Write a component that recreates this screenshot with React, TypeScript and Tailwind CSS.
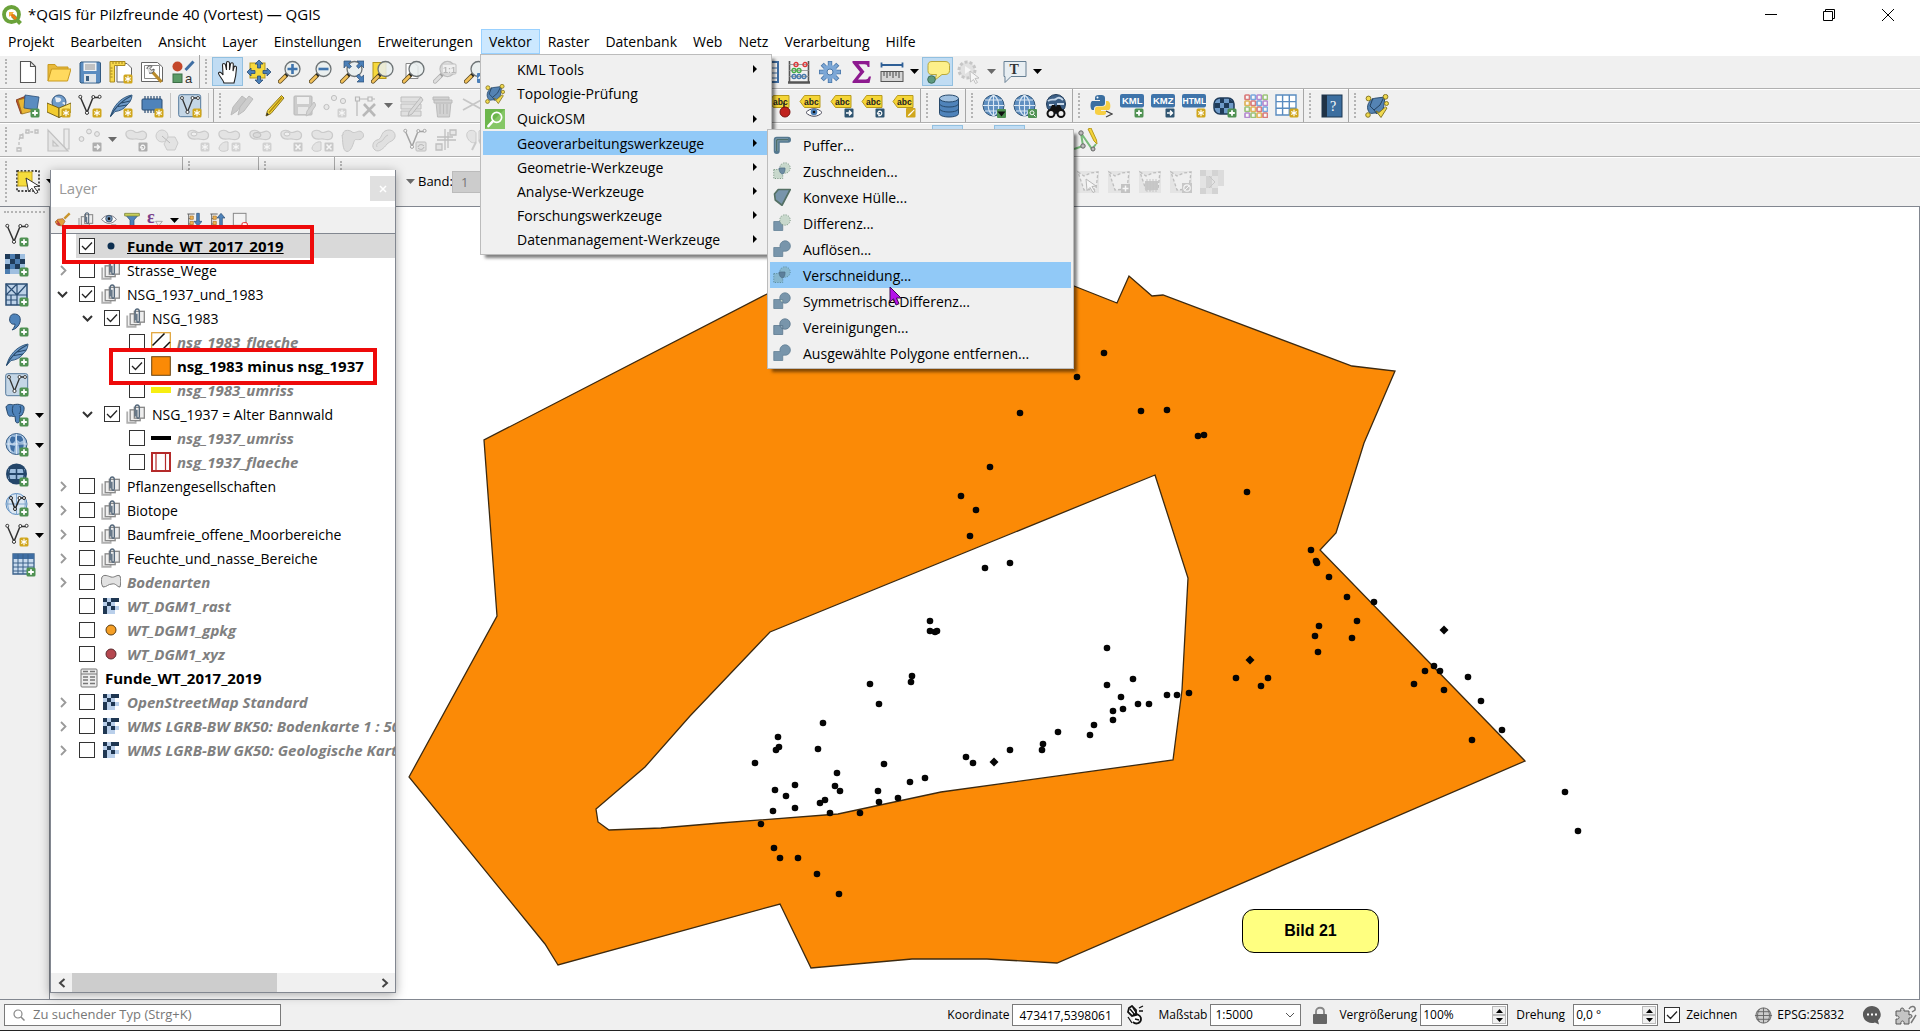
import React from "react";

/* ------------------------------------------------------------------ */
/* Icon building blocks (24 x 24 grid)                                 */
/* ------------------------------------------------------------------ */

const plusBadge = (
  <g>
    <rect x="14.5" y="14.5" width="9" height="9" rx="1.5" fill="#4f9152" />
    <path d="M19 16.2v5.6M16.2 19h5.6" stroke="#fff" strokeWidth="1.8" />
  </g>
);
const starBadge = (
  <g>
    <rect x="14.5" y="14.5" width="9" height="9" rx="1.5" fill="#d0a61c" />
    <path d="M19 15.8v6.4M16.2 17.4l5.6 3.2M16.2 20.6l5.6-3.2" stroke="#fff" strokeWidth="1.2" />
  </g>
);
const arrowBadge = (
  <g>
    <rect x="14.5" y="14.5" width="9" height="9" rx="1" fill="#2f5470" />
    <path d="M16 19h5M19 16.6l2.4 2.4-2.4 2.4" stroke="#fff" strokeWidth="1.5" fill="none" />
  </g>
);
const rotateBadge = (
  <g>
    <rect x="14.5" y="14.5" width="9" height="9" rx="1" fill="#2f5470" />
    <path d="M17.2 21.6c4.4.2 4.6-4.2 1.6-4.4-1.8 0-2 1.6-1.6 2.600M16.200 18.600l1 1.600 1.700-.6" stroke="#fff" strokeWidth="1.2" fill="none" />
  </g>
);
const crossBadge = (
  <g>
    <rect x="14.5" y="14.5" width="9" height="9" rx="1" fill="#c98080" />
    <path d="M16.5 16.5l5 5M21.5 16.5l-5 5" stroke="#fff" strokeWidth="1.6" />
  </g>
);
const vLine = (
  <g fill="none" stroke="#333" strokeWidth="1.5">
    <path d="M2.5 3.5L9 18.5 15 3.500h6.500" />
    <g fill="#fff" strokeWidth="1">
      <circle cx="2.300" cy="2.800" r="1.500" />
      <circle cx="9" cy="18.800" r="1.600" />
      <circle cx="15.300" cy="3" r="1.500" />
      <circle cx="21.600" cy="2.800" r="1.500" />
    </g>
  </g>
);
const feather = (
  <g>
    <path d="M1.500 22.500C4 12 12 3 23 1c0 5-3 8-5 10-3 4-7 6-12 6.500z" fill="#6f9bc9" stroke="#335a80" strokeWidth="1" />
    <path d="M1.500 22.500C6 13 13 6.500 22 2M9 12.500l9-1.500M12.500 9l8.500-2" stroke="#27496b" strokeWidth="1.100" fill="none" />
  </g>
);
const lens = (
  <g>
    <path d="M8.500 15L2 21.500" stroke="#5b4a20" strokeWidth="4.200" strokeLinecap="round" />
    <path d="M7 16.500L2 21.500" stroke="#f2c15a" strokeWidth="2.600" strokeLinecap="round" />
    <path d="M9.500 14l-1.500 1.500" stroke="#222" strokeWidth="3" />
    <circle cx="14.500" cy="9" r="7.500" fill="#e9eeee" fillOpacity=".85" stroke="#6d7375" strokeWidth="1.300" />
  </g>
);
const cloudBlob = (
  <path d="M2 7c-1-5 6-6 9-3 3 2 6-2 9-.5 4 2 3 7-1 8-4 .5-5-1-8-.5-4 .5-8 0-9-4z" fill="#cfd3ce" stroke="#8f948e" strokeWidth="1.200" />
);
const globe = (
  <g>
    <circle cx="11.500" cy="11.500" r="10.500" fill="#5f8fc0" stroke="#2f5478" strokeWidth="1" />
    <path d="M1 11.500h21M3 6h17M3 17h17M11.500 1v21M11.500 1c-7 5-7 16 0 21M11.500 1c7 5 7 16 0 21" stroke="#dbe8f4" strokeWidth="1.100" fill="none" />
  </g>
);
const abcTag = (
  <g>
    <path d="M1 7.500L5.500 1.500H21v12H5.500z" fill="#f5d536" stroke="#b79a1d" strokeWidth="1" />
    <text x="5" y="10.500" fontSize="8.500" fontWeight="700" fontFamily="Liberation Sans, sans-serif" fill="#222">abc</text>
  </g>
);
const pencil = (x: string, y: string, l: string) => (
  <g>
    <path d="M20.500 1.500l-14 15-1.500 5.500 5-2.500 13-15.500z" fill={y} stroke={l} strokeWidth="1" />
    <path d="M21 3.500L8 18.500" stroke={x} strokeWidth="1.500" />
    <path d="M5 22l1-3.500 2 2z" fill="#333" />
  </g>
);
const topology = (
  <g>
    <path d="M3 16c-2-6 3-12 9-12l8-1-1 7c0 6-4 10-9 9-3 0-5 2-7-3z" fill="#5483b3" stroke="#2b4d70" />
    <path d="M8 4l-3 8 4 4 6-5 4-8M9 16l3 4" fill="none" stroke="#24425f" />
    <g fill="#f0d94f" stroke="#7d6d1c" strokeWidth=".9">
      <circle cx="3.500" cy="4.500" r="2.400" />
      <circle cx="20.500" cy="2.800" r="2.400" />
      <circle cx="21.500" cy="9.500" r="2" />
      <circle cx="3" cy="21" r="2.300" />
      <path d="M11 17l3 1.500 6.500-5.500 1.500 1-6 9.500z" />
    </g>
  </g>
);
const rasterCells = (
  <g>
    <rect width="20" height="20" x="0" y="1" fill="#9fbfe0" />
    <path d="M0 1h5v5H0zM10 1h5v5h-5zM5 6h5v5H5zM15 6h5v5h-5zM0 11h5v5H0zM10 11h5v5h-5z" fill="#1f3b59" />
    <path d="M5 1h5v5H5zM10 6h5v5h-5zM5 11h5v5H5zM0 16h5v5H0z" fill="#4c7db0" />
  </g>
);
const meshPoly = (
  <g>
    <rect x="1" y="1" width="22" height="22" fill="#d2d4d2" />
    <path d="M2 2l6 4 7-3 7-1-2 17-12 1z" fill="#eee" stroke="#6f7571" strokeWidth="1.300" strokeDasharray="3 2" />
  </g>
);
const signBoard = (t: string, size: string, x: string) => (
  <g>
    <rect x="0" y="0" width="24" height="13.500" rx="2" fill="#3f74aa" />
    <text x={x} y="10.200" fontSize={size} fontWeight="700" fontFamily="Liberation Sans, sans-serif" fill="#fff">{t}</text>
  </g>
);
const square = "M1 10h12v12H1z";

const icons: Record<string, React.ReactNode> = {
  newDoc: <path d="M4.500 1.500h10l5 5v16h-15zM14.500 1.500v5h5" fill="#fff" stroke="#555" strokeWidth="1.100" />,
  folder: (
    <g stroke="#c99a1f" strokeWidth="1">
      <path d="M1 21V4.500h7l2 2.500h11v3" fill="#e8b93a" />
      <path d="M1 21l3.500-12H24l-3.500 12z" fill="#ffd95e" />
    </g>
  ),
  save: (
    <g>
      <path d="M2 3l1-1h18.500l1 1v19l-1 1H3l-1-1z" fill="#5a8cc0" stroke="#335a80" />
      <rect x="5.500" y="2.500" width="13" height="8.500" fill="#eef1f3" />
      <path d="M7 5h10M7 7h10M7 9h10" stroke="#888" strokeWidth=".9" />
      <rect x="6" y="14" width="12" height="8.500" fill="#dfe5ea" />
      <rect x="8" y="16" width="3" height="5" fill="#3b5e80" />
    </g>
  ),
  layoutNew: (
    <g>
      <path d="M8 3.500h10l4.500 4.500v14H8z" fill="#fff" stroke="#666" />
      <path d="M1 1.500h15v4H5.500v16.500H1z" fill="#f7d84a" stroke="#a98a1e" />
      <path d="M4 2v2M7 2v2M10 2v2M13 2v2M1.500 8h2M1.500 11h2M1.500 14h2M1.500 17h2" stroke="#8a701a" strokeWidth=".8" />
      {starBadge}
    </g>
  ),
  layoutManager: (
    <g>
      <path d="M1.500 2.500h16l5 4.500v14.500h-21z" fill="#fff" stroke="#666" />
      <path d="M4.500 5.500h15v13h-15z" fill="none" stroke="#888" />
      <path d="M12.500 12l9 10" stroke="#b98a2a" strokeWidth="3.200" />
      <path d="M7 9c0-3 3-4 5-2.500l-2 2 1.500 1.800L14 9c.5 3-2 5-5 4" fill="#ddd" stroke="#555" />
    </g>
  ),
  style: (
    <g>
      <circle cx="6.500" cy="6.500" r="5" fill="#c4472a" />
      <path d="M14.500 10l8-8.500" stroke="#3f6ea3" strokeWidth="3" />
      <rect x="2" y="14" width="9" height="8.500" fill="#5b9a66" stroke="#3c6e46" />
      <text x="14" y="22.500" fontSize="13" fontFamily="Liberation Sans, sans-serif" fill="#333">a</text>
    </g>
  ),
  hand: (
    <path d="M8 23c-1-4-6-8-5.500-10 1-2 3.500 0 4.500 2L6.500 5c0-2 2.500-2 3 0L10.500 10V3c0-2 2.500-2 3 0v7l1-6c.5-1.800 3-1.500 2.800.5L17 11l1-4c.7-1.500 2.700-1 2.500.8-.3 5-.5 9-2.500 15.200z" fill="#fff" stroke="#222" strokeWidth="1.100" />
  ),
  panSelection: (
    <g>
      <rect x="3" y="3" width="15" height="15" fill="#f6d83c" stroke="#b3961c" />
      <path d="M12 0l4 4h-2.500v4h-3V4H8zM12 24l4-4h-2.500v-4h-3v4H8zM0 12l4-4v2.500h4v3H4V16zM24 12l-4-4v2.500h-4v3h4V16z" fill="#4a7fb8" stroke="#2b4d73" strokeWidth=".8" />
    </g>
  ),
  zoomIn: <g>{lens}<path d="M14.500 4v10M9.500 9h10" stroke="#3f74ad" strokeWidth="2.600" /></g>,
  zoomOut: <g>{lens}<path d="M9.500 9h10" stroke="#3f74ad" strokeWidth="2.600" /></g>,
  zoomFull: (
    <g>
      {lens}
      <path d="M4 1h7L8.500 3.500l3 3-2.500 2-3-3L4 8zM24 1v7l-2.500-2.500-3 3-2-2.500 3-3L17 1zM24 22h-7l2.500-2.500-3-3 2-2.500 3 3L24 15z" fill="#4a7fb8" stroke="#2b4d73" strokeWidth=".7" />
    </g>
  ),
  zoomSel: <g><rect x="2" y="2.500" width="13" height="16" fill="#f6d83c" stroke="#b3961c" />{lens}</g>,
  zoomLayer: <g><path d="M4 3.500h9l3 3v12H4z" fill="#fff" stroke="#888" />{lens}</g>,
  zoomNative: (
    <g>
      {lens}
      <rect x="9" y="4" width="14" height="10" rx="1" fill="#eee" stroke="#777" />
      <text x="10" y="12.500" fontSize="9" fontWeight="700" fontFamily="Liberation Sans, sans-serif" fill="#666">1:1</text>
    </g>
  ),
  zoomLast: <g>{lens}<rect x="13" y="13" width="10" height="10" rx="1" fill="#4a7fb8" /><path d="M20 18h-5l2.500-2.500" stroke="#fff" strokeWidth="1.500" fill="none" /></g>,
  table: <g><rect x="2" y="2" width="20" height="20" fill="#fff" stroke="#3f6ea3" strokeWidth="2" /><path d="M2 8h20M2 13h20M2 18h20M15 2v20" stroke="#3f6ea3" /></g>,
  abacus: (
    <g fill="none" strokeWidth="1.300">
      <path d="M2.500 1v21M21.500 1v21" stroke="#555" strokeWidth="1.600" />
      <path d="M2 4.500h20M2 10.500h20M2 16.500h20" stroke="#888" strokeWidth=".8" />
      <path d="M1 22.500h22" stroke="#555" strokeWidth="2.500" />
      <g stroke="#d33"><circle cx="9" cy="4.500" r="2" /><circle cx="18" cy="4.500" r="2" /></g>
      <g stroke="#4a4"><circle cx="7" cy="10.500" r="2" /><circle cx="12" cy="10.500" r="2" /></g>
      <g stroke="#47a"><circle cx="7" cy="16.500" r="2" /><circle cx="12" cy="16.500" r="2" /><circle cx="17" cy="16.500" r="2" /></g>
    </g>
  ),
  gear: (
    <g>
      <path d="M12 1v22M1 12h22M4.200 4.200l15.600 15.600M19.800 4.200L4.200 19.800" stroke="#4a78aa" strokeWidth="4.400" />
      <path d="M12 1.800v20.400M1.800 12h20.400M4.800 4.800l14.400 14.400M19.200 4.800L4.800 19.200" stroke="#7ca7d6" strokeWidth="2.800" />
      <circle cx="12" cy="12" r="7" fill="#7ca7d6" />
      <circle cx="12" cy="12" r="3" fill="#f0f0f0" stroke="#4a78aa" />
    </g>
  ),
  sigma: <path d="M3.500 1h17v6h-1.800c-.4-2-1.200-2.700-3.200-2.700H9.500l6 7.500-6.500 7.700h7.500c2 0 2.800-1 3.400-3H22L20.500 23h-17v-1.500L11 12 3.500 2.800z" fill="#8d1a8f" />,
  ruler: (
    <g>
      <path d="M1 5h22M1.500 2.500v5M22.500 2.500v5" stroke="#2f5f96" strokeWidth="1.800" />
      <rect x="1" y="11.500" width="22" height="10" fill="#d5d5d5" stroke="#555" />
      <path d="M4 12v4M7 12v6M10 12v4M13 12v6M16 12v4M19 12v6" stroke="#444" />
    </g>
  ),
  mapTip: (
    <g>
      <path d="M6 1.500h13c3 0 4.500 1.500 4.500 4v5c0 2.500-1.500 4-4.500 4h-3L9 20l1.500-5.500H6c-3 0-4-1.500-4-4v-5c0-2.500 1-4 4-4z" fill="#fdf08a" stroke="#b9a83c" />
      <circle cx="5.500" cy="19.500" r="3.800" fill="#5e9a80" stroke="#3c6e58" />
    </g>
  ),
  action: (
    <g>
      <circle cx="10" cy="10" r="8" fill="#ccc" stroke="#888" strokeDasharray="3 2" strokeWidth="3" />
      <path d="M8 6l6 4-6 4z" fill="#fff" />
      <path d="M13 11l9 7-4 .5 2.500 4-2 1-2-4-3 2.500z" fill="#fff" stroke="#777" />
    </g>
  ),
  textAnn: (
    <g>
      <path d="M1 1.500h22v15H8l-6 6V16.500H1z" fill="#e8eef2" stroke="#667f93" />
      <text x="6.500" y="14" fontSize="14" fontFamily="Liberation Serif, serif" fontWeight="700" fill="#333">T</text>
    </g>
  ),
  dataSource: (
    <g strokeWidth=".8">
      <path d="M0 6l10-4 5 12-10 6z" fill="#c4562a" stroke="#7a2f12" />
      <path d="M2 6l12-3 3 14-11 3z" fill="#e8b636" stroke="#94701a" />
      <path d="M9 1l14 2-2 13-13-2z" fill="#5a8cc0" stroke="#2b4d73" />
      {plusBadge}
    </g>
  ),
  geopackage: (
    <g strokeWidth=".9">
      <circle cx="12" cy="8" r="7" fill="#6f9bc9" stroke="#2b4d73" />
      <path d="M8 3c3 1 5 0 6 2s-2 4-5 3zM15 9c2-2 4-1 3 2" fill="#e8eef4" />
      <path d="M0 9l12 5v9.500L0 18z" fill="#f2cb2f" stroke="#6b5710" />
      <path d="M24 9l-12 5v9.500L24 18z" fill="#fbe36a" stroke="#6b5710" />
      {starBadge}
    </g>
  ),
  shapeNew: <g>{vLine}{starBadge}</g>,
  featherNew: <g>{feather}{starBadge}</g>,
  chip: (
    <g>
      <path d="M5 2v17M8 2v17M11 2v17M14 2v17M17 2v17M20 2v17" stroke="#2b4d73" strokeWidth="1.200" />
      <rect x="2" y="5" width="20" height="11" rx="1" fill="#4f83ba" stroke="#2b4d73" />
      {starBadge}
    </g>
  ),
  virtual: (
    <g>
      <rect x=".7" y=".7" width="22" height="22" rx="2" fill="#c4d6e6" stroke="#54799c" />
      <g fill="none" stroke="#333" strokeWidth="1.300"><path d="M4 4l5.500 14L15 4h5" /><g fill="#fff" strokeWidth=".9"><circle cx="4" cy="4" r="1.500" /><circle cx="9.500" cy="18" r="1.600" /><circle cx="14.500" cy="4" r="1.500" /><circle cx="20" cy="4" r="1.500" /></g></g>
      {starBadge}
    </g>
  ),
  virtualAdd: (
    <g>
      <rect x=".7" y=".7" width="22" height="22" rx="2" fill="#c4d6e6" stroke="#54799c" />
      <g fill="none" stroke="#333" strokeWidth="1.300"><path d="M4 4l5.500 14L15 4h5" /><g fill="#fff" strokeWidth=".9"><circle cx="4" cy="4" r="1.500" /><circle cx="9.500" cy="18" r="1.600" /><circle cx="14.500" cy="4" r="1.500" /><circle cx="20" cy="4" r="1.500" /></g></g>
      {plusBadge}
    </g>
  ),
  pencils: (
    <g>
      <path d="M12 2L3 13l-2 8 6-4 9-12z" fill="#a88" stroke="#766" />
      <path d="M19 2l-9 11-2 8 6-4 9-12z" fill="#b5958f" stroke="#766" />
    </g>
  ),
  pencil: pencil("#b08a10", "#f6d93a", "#8a7218"),
  saveEdit: (
    <g>
      <rect x="2" y="2" width="18" height="19" rx="1" fill="#999" stroke="#666" />
      <rect x="5" y="3" width="12" height="7" fill="#eee" /><rect x="6" y="13" width="10" height="7" fill="#ddd" />
      <path d="M22 8l-7 9-1 5 4-2 6-9z" fill="#aaa" stroke="#777" />
    </g>
  ),
  pointsNew: <g><g fill="#ddd" stroke="#777"><circle cx="3.500" cy="13" r="2.600" /><circle cx="11" cy="4" r="2.600" /><circle cx="20" cy="7" r="2.600" /></g>{starBadge}</g>,
  vertexTool: (
    <g fill="none" stroke="#666" strokeWidth="1.200">
      <path d="M3 22V5h18" />
      <path d="M1.500 3h4v4h-4zM14 3h4v4h-4z" fill="#eee" />
      <path d="M10 10l11 12M21 10L9 22" strokeWidth="2.600" />
    </g>
  ),
  modify: (
    <g>
      <path d="M1 3h20v5H1zM1 10h20v5H1zM1 17h20v5H1z" fill="#c9cdb0" stroke="#777" />
      <path d="M21 3L9 18l-1 4 4-2L23 6z" fill="#bbb" stroke="#666" />
    </g>
  ),
  trash: (
    <g fill="#c3a0a0" stroke="#866"><path d="M2 3h16v3H2z" /><path d="M5 8h15l-1.500 15h-12z" /><path d="M9 10v10M12.500 10v10M16 10v10" /><path d="M3 6h18v3H3z" /></g>
  ),
  scissors: <g fill="none" stroke="#888" strokeWidth="1.800"><path d="M1 5l20 11M1 16L21 5" /><circle cx="22" cy="18" r="3" /></g>,
  abcPin: <g>{abcTag}<path d="M16 9v6" stroke="#222" strokeWidth="1.500" /><circle cx="17" cy="18" r="5" fill="#c0221e" stroke="#7c100e" /></g>,
  abcEye: <g>{abcTag}<path d="M7 18.500c4-5 12-5 16 0-4 5-12 5-16 0z" fill="#fff" stroke="#445" /><circle cx="15" cy="18" r="3.300" fill="#4a7fb8" /><circle cx="15" cy="18" r="1.300" fill="#111" /></g>,
  abcMove: <g>{abcTag}{arrowBadge}</g>,
  abcRotate: <g>{abcTag}{rotateBadge}</g>,
  abcEdit: <g>{abcTag}<rect x="14" y="14" width="9.500" height="9.500" rx="1" fill="#d0a61c" /><path d="M22 15.500l-5.500 5-.8 1.800 2-.8 5-5.500z" fill="#fff" /></g>,
  database: (
    <g stroke="#27496b" strokeWidth="1">
      <path d="M2.500 4.500v15c0 2 4 3.500 9.500 3.500s9.500-1.500 9.500-3.500v-15z" fill="#4f83ba" />
      <ellipse cx="12" cy="4.500" rx="9.500" ry="3.500" fill="#9fc0e0" />
      <path d="M2.500 9.500c0 2 4 3.500 9.500 3.500s9.500-1.500 9.500-3.500M2.500 14.500c0 2 4 3.500 9.500 3.500s9.500-1.500 9.500-3.500" fill="none" />
    </g>
  ),
  globeAdd: <g>{globe}<rect x="15" y="15" width="9" height="9" rx="1" fill="#4f9152" /><path d="M15.500 17.500h8l-4 5z" fill="#111" /></g>,
  globeSearch: <g>{globe}<rect x="15" y="15" width="9" height="9" rx="1" fill="#4f9152" /><circle cx="19" cy="18.800" r="2" fill="none" stroke="#fff" /><path d="M20.500 20.500l2 2" stroke="#fff" /></g>,
  binoculars: (
    <g>
      <circle cx="12" cy="10" r="9.500" fill="#3c5f86" stroke="#1f3a57" />
      <path d="M4 7c4-3 6 0 8-2s4-2 7 1M5 11h5M13 10h7" stroke="#c6d8ea" strokeWidth="1.800" fill="none" />
      <path d="M8 11h3l1 2 1-2h3l4 8H4z" fill="#111" />
      <circle cx="7" cy="19.500" r="3.500" fill="#eee" stroke="#111" strokeWidth="2" />
      <circle cx="17" cy="19.500" r="3.500" fill="#eee" stroke="#111" strokeWidth="2" />
    </g>
  ),
  python: (
    <g>
      <path d="M10 1c5-.5 6 1 6 3v5c0 2-1 3-3 3H8c-2 0-3 1-3 3v1H3c-2-1-2-8 0-9h8V6H6V4c0-2 1-2.700 4-3z" fill="#3b6fa0" />
      <path d="M11 21c-4 0-5-1-5-3v-3c0-1.500 1-2.500 3-2.500h5c2 0 3-1 3-3V7h2c3 1 3 8 1 9h-8v1h5v2c0 1.500-1 2-4 2z" fill="#f7cf44" />
      <circle cx="8.500" cy="3.500" r="1" fill="#fff" />
      <path d="M17 17l6 3-6 3" fill="none" stroke="#444" strokeWidth="1.300" />
    </g>
  ),
  kml: <g>{signBoard("KML", "9.500", "2")}{plusBadge}</g>,
  kmz: <g>{signBoard("KMZ", "9.500", "2")}{arrowBadge}</g>,
  html: <g>{signBoard("HTML", "8.500", "0.500")}{starBadge}</g>,
  rasterGlobe: (
    <g>
      <rect x="1" y="4" width="20" height="16" rx="6" fill="#6f9bc9" stroke="#1f3b59" strokeWidth="1.500" />
      <path d="M7 4h4v5H7zM11 9h5v5h-5zM16 4.500l4 3V9h-4zM1.500 9H7v5H1.500zM7 14h4v6H7z" fill="#1f3b59" />
      {plusBadge}
    </g>
  ),
  colorGrid: (
    <g>
      {[0, 1, 2, 3].map((r) => [0, 1, 2, 3].map((c) => (
        <rect key={`${r}${c}`} x={1 + c * 6} y={1 + r * 6} width="4.500" height="4.500" rx=".8" fill="#fff" fillOpacity=".5" strokeWidth="1.700"
          stroke={["#d97b7b", "#9cc37a", "#7aa7dd", "#e0b35a", "#b58ad0"][(r * 3 + c * 2) % 5]} />
      )))}
    </g>
  ),
  gridNew: <g><path d="M1 1h20v20H1zM1 7.600h20M1 14.300h20M7.600 1v20M14.300 1v20" fill="#fff" stroke="#5a8cc0" strokeWidth="1.400" />{starBadge}</g>,
  book: (
    <g>
      <rect x="2" y="1" width="20" height="22" fill="#3c6e9f" stroke="#1d3650" />
      <rect x="2" y="1" width="5" height="22" fill="#1f3246" />
      <text x="10" y="17" fontSize="14" fontFamily="Liberation Serif, serif" fill="#fff">?</text>
    </g>
  ),
  topology,
  cad: <g fill="none" stroke="#777" strokeWidth="1.300"><path d="M3 22v-8c0-6 4-10 10-10h8" strokeDasharray="3 2" /><path d="M1 20h4v3H1zM4 7h3v3H4zM10 2h3v3h-3zM19 2h3v3h-3z" fill="#eee" /></g>,
  triangleRuler: <g fill="#ddd6cc" stroke="#877d70" strokeWidth="1.200"><path d="M1 2v21h20zM6 13v5h5z" /><path d="M17 1h5v20h-3L17 18z" fill="#e5e5e5" /></g>,
  pointsMove: <g><g fill="#ddd" stroke="#777"><circle cx="3.500" cy="11" r="2.400" /><circle cx="11" cy="3.500" r="2.400" /><circle cx="19" cy="6" r="2.400" /></g>{arrowBadge}</g>,
  featRotate: <g>{cloudBlob}{rotateBadge}</g>,
  featSimplify: <g fill="#cfd3ce" stroke="#8f948e"><circle cx="7" cy="8" r="6" /><path d="M13 9h7l3 6-3 7h-8l-3-6z" /><path d="M7 8l8 7" stroke="#666" /></g>,
  ringAdd: <g>{cloudBlob}<ellipse cx="8" cy="6" rx="3" ry="2" fill="#f0f0f0" stroke="#888" />{starBadge}</g>,
  partAdd: <g>{cloudBlob}<path d="M2 20c1-4 5-7 9-6v8c-3 2-9 2-9-2z" fill="#cfd3ce" stroke="#8f948e" />{starBadge}</g>,
  ringFill: <g>{cloudBlob}<ellipse cx="9" cy="7" rx="4" ry="2.500" fill="#bbb" stroke="#777" />{starBadge}</g>,
  ringDelete: <g>{cloudBlob}<ellipse cx="8" cy="6" rx="3" ry="2" fill="#f0f0f0" stroke="#888" />{crossBadge}</g>,
  partDelete: <g>{cloudBlob}<path d="M2 20c1-4 5-7 9-6v8c-3 2-9 2-9-2z" fill="#cfd3ce" stroke="#8f948e" />{crossBadge}</g>,
  reshape: <path d="M2 7c-1-5 6-6 9-3 3 2 6-2 9-.5 4 2 3 7-1 8-4 .5-5-1-6 2s-3 10-7 10c-5 0-4-12-5-16.500z" fill="#bcc5b8" stroke="#888" />,
  offset: <g fill="#c5cbc0" stroke="#888"><path d="M3 22c-4-3-2-9 2-10 5-1 4-7 8-9 6-3 11 1 10 6-1 4-5 4-8 7-3 4-8 9-12 6z" /><path d="M5 19c-1-2 0-4 3-5 4-1 4-6 8-7" fill="none" /></g>,
  splitV: <g>{vLine}<rect x="13" y="14" width="10" height="9" rx="1" fill="#ccc" stroke="#777" /><path d="M15 19c1-3 4-3 6-1M21 19c-1 3-4 3-6 1" stroke="#555" fill="none" /></g>,
  mergeNodes: <g fill="none" stroke="#777" strokeWidth="1.300"><path d="M11 1v21M3 12h19M14 4v16M3 9h16" /><path d="M16 2h6v5h-6z" fill="#ddc" /><path d="M2 16h6v6H2z" fill="#dcc" /></g>,
  cutFeat: <g fill="#cfd3ce" stroke="#8f948e"><path d="M2 9c-2-8 8-8 9-4v9c-3 2-7 0-9-5zM14 3c5-4 12 4 6 8l-6 1z" /><path d="M11 14l-4 8M14 12l5 10" strokeWidth="2" /></g>,
  trace: (
    <g>
      <path d="M0 21l9-3L7 5l11 16 4-5" fill="none" stroke="#77b979" strokeWidth="2" />
      <g fill="#bbb" stroke="#666"><circle cx="7" cy="5" r="2.200" /><circle cx="9" cy="18" r="2.200" /><circle cx="19" cy="21" r="2" /></g>
      <path d="M14 1l6 12 3 3-.5-4L17 0z" fill="#f4d43a" stroke="#b79a1d" />
    </g>
  ),
  magnet: <path d="M4 23V14C4 3 20 3 20 14v9h-5v-9c0-5-6-5-6 0v9z" fill="#444" />,
  select: (
    <g>
      <rect x="1" y="1" width="22" height="20" fill="none" stroke="#111" strokeWidth="1.400" strokeDasharray="2 1.600" />
      <rect x="2" y="2" width="14" height="14" fill="#f6dc3c" stroke="#c4a51e" />
      <path d="M10 8l13 8-5 .8 4 5.500-2.500 1.500-3.600-5.600-3.400 3.400z" fill="#fff" stroke="#333" />
    </g>
  ),
  meshSel: <g>{meshPoly}<path d="M10 9l10 7-4 .5 3 5-2 1-3-5-3 3z" fill="#fff" stroke="#666" /></g>,
  meshAdd: <g>{meshPoly}<rect x="14" y="14" width="9" height="9" fill="#7d827d" /><path d="M18.500 15.500v6M15.500 18.500h6" stroke="#fff" strokeWidth="1.500" /></g>,
  meshChip: <g>{meshPoly}<rect x="7" y="11" width="13" height="9" fill="#8a8f8a" /><path d="M9 9v13M12 9v13M15 9v13M18 9v13" stroke="#888" /></g>,
  meshDel: <g>{meshPoly}<rect x="13" y="13" width="10" height="10" fill="#8f8a8a" /><circle cx="18" cy="18" r="3.200" fill="none" stroke="#fff" strokeWidth="1.200" /><path d="M16 20l4-4" stroke="#fff" /></g>,
  meshTiles: (
    <g>
      <path d="M0 0h18v24H0z" fill="#cfd1cd" />
      <path d="M0 0h6v6H0zM6 6h6v12H6zM0 18h6v6H0zM12 0h6v6h-6zM12 18h6v6h-6z" fill="#a9aba4" />
      <path d="M18 0h6v16h-6z" fill="#c4c0a8" />
      <path d="M9 6l6 6-6 6" fill="none" stroke="#8f8c78" />
    </g>
  ),
  addVector: <g>{vLine}{plusBadge}</g>,
  addRaster: <g>{rasterCells}{plusBadge}</g>,
  addMesh: (
    <g>
      <rect x="1" y="1" width="21" height="21" fill="#bdd2e8" stroke="#2b4d73" strokeWidth="1.500" />
      <path d="M1 12h21M12 1v21M1 1l11 11M12 1L1 12M12 12L22 1M6 12v10M1 17h11" stroke="#2b4d73" strokeWidth="1.200" />
      {plusBadge}
    </g>
  ),
  addText: <g><path d="M9 1c5 0 7 3 6 8-1 4-4 7-8 8 2-2 3-4 3-6-7 2-7-10-1-10z" fill="#4f83ba" stroke="#2b4d73" />{plusBadge}</g>,
  addFeather: <g>{feather}{plusBadge}</g>,
  addPostgis: (
    <g>
      <path d="M1 4c1-3 5-3 7-2 3-1 6-1 8 0 4 0 4 5 1 10-1 1-2 1-2 0l-.5 6c-.5 3-4 2-4 0l-.5-5c-2 1-3 0-4 0-2 1-3-1-3.500-3z" fill="#4f83ba" stroke="#24466a" />
      <path d="M8 3c-1 3-1 7 1 9M15 3c1 3 1 6-1 8" stroke="#24466a" fill="none" />
      {plusBadge}
    </g>
  ),
  addWms: (
    <g>
      <circle cx="11.500" cy="11" r="10.500" fill="#9dbdde" stroke="#3a6089" />
      <path d="M4 6c1-3 4-3 6-2v4l-3 3zM12 3c4-1 6 1 7 4l-4 2-3-2zM5 12l5 1-1 6-3-2zM13 10l7 1-2 5-3 2z" fill="#3f6ea3" />
      <path d="M1 11h21M11.500 1v20M6 3c-3 5-3 11 0 16M17 3c3 5 3 11 0 16" stroke="#e4edf6" strokeWidth=".8" fill="none" />
      {plusBadge}
    </g>
  ),
  addWcs: (
    <g>
      <circle cx="11.500" cy="11" r="10.500" fill="#24466a" />
      <path d="M3 6h17v4H3zM3 12h17v4H3z" fill="#9dbdde" />
      <path d="M11.500 1v20M6 3c-3 5-3 11 0 16M17 3c3 5 3 11 0 16" stroke="#24466a" strokeWidth="1.500" fill="none" />
      {plusBadge}
    </g>
  ),
  addWfs: (
    <g>
      <circle cx="11.500" cy="11" r="10.500" fill="#dbe7f3" stroke="#5a8cc0" />
      <path d="M1 11h21M11.500 1v20M5 3c-3 5-3 11 0 16M18 3c3 5 3 11 0 16" stroke="#7fa5cc" fill="none" />
      <path d="M6 5l4 11 5-11h5" stroke="#222" strokeWidth="1.500" fill="none" />
      <g fill="#fff" stroke="#222"><circle cx="6" cy="5" r="1.500" /><circle cx="10" cy="16" r="1.500" /><circle cx="14.500" cy="5" r="1.500" /><circle cx="19" cy="5" r="1.500" /></g>
      {plusBadge}
    </g>
  ),
  addTable: <g><path d="M1 1h21v20H1z" fill="#c9dbee" stroke="#3a6089" strokeWidth="1.300" /><path d="M1 1h21v5H1z" fill="#3f6ea3" /><path d="M1 10h21M1 14h21M1 18h21M6 1v20M11 1v20M16 1v20" stroke="#3a6089" />{plusBadge}</g>,
  quickosm: (
    <g>
      <rect width="24" height="24" fill="#6cb64c" />
      <path d="M0 24L24 0v24z" fill="#85c766" />
      <circle cx="14" cy="10" r="6" fill="none" stroke="#fff" strokeWidth="2" />
      <path d="M9.500 14.500L4 20.500" stroke="#fff" strokeWidth="3" strokeLinecap="round" />
    </g>
  ),
  buffer: <g fill="none" strokeLinejoin="round"><path d="M5 20V5h15" stroke="#54788f" strokeWidth="8" strokeLinecap="round" /><path d="M5 20V5h15" stroke="#7e9bb0" strokeWidth="4" /><path d="M5 20V5h15" stroke="#3f5f4f" strokeWidth="1.300" /></g>,
  clip: (
    <g>
      <circle cx="16" cy="8" r="7" fill="#c8d8cc" stroke="#5f8069" strokeDasharray="1.500 1.800" />
      <path d={square} fill="#c8d8cc" stroke="#5f8069" strokeDasharray="1.500 1.800" />
      <path d="M8 8h8v2c0 3-2 6-3 6-3 0-5-4-5-8z" fill="#6d8ca3" stroke="#4f6f86" />
    </g>
  ),
  clip2: (
    <g>
      <circle cx="16" cy="8" r="7" fill="#86b7cf" stroke="#4f7f8c" strokeDasharray="1.500 1.800" />
      <path d={square} fill="#86b7cf" stroke="#4f7f8c" strokeDasharray="1.500 1.800" />
      <path d="M8 8h8v2c0 3-2 6-3 6-3 0-5-4-5-8z" fill="#5c7f9b" stroke="#4f6f86" />
    </g>
  ),
  hull: <path d="M7 2h16L12 23 3 16 2 8z" fill="#7895ab" stroke="#547064" strokeWidth="2.200" strokeLinejoin="round" />,
  difference: <g><path d={square} fill="#7895ab" stroke="#5f7d93" /><circle cx="16" cy="8" r="7" fill="#c8d8cc" stroke="#5f8069" strokeDasharray="1.500 1.800" /></g>,
  dissolve: <path d="M1 10h8.500a7 7 0 1 1 6 5H13v7H1z" fill="#7895ab" stroke="#5f7d93" />,
  symdiff: <g stroke="#5f7d93"><path d={square} fill="#7895ab" /><circle cx="16" cy="8" r="7" fill="#7895ab" /><path d="M13 10v4.300c-2-.5-3.300-2.300-3.700-4.300z" fill="#c8d8cc" /></g>,
  union: <g stroke="#557389"><path d={square} fill="#7895ab" /><circle cx="16" cy="8" r="7" fill="#7895ab" /><path d="M13 10v4.300c-2-.5-3.300-2.300-3.700-4.300z" fill="#8ea7b9" /></g>,
  groupLayer: (
    <g fill="#eee" stroke="#8a8a8a" strokeWidth="1.600">
      <path d="M1.500 9v13.500h10V20" fill="none" stroke="#b0b0b0" strokeWidth="2.200" />
      <rect x="5" y="7" width="12" height="13" />
      <rect x="10" y="4" width="12" height="13" />
      <path d="M11 15V4.500c0-4.500 5-4.500 5 0V15c0 3-3 3-3 0V7" fill="none" stroke="#56697c" strokeWidth="1.700" />
    </g>
  ),
  brush: <g><path d="M22 2l-8 8" stroke="#c9952e" strokeWidth="3.500" /><path d="M4 11l8-1 3 4-4 7-7-1-4-5z" fill="#e2a13a" stroke="#9c5a2a" /><path d="M3 13l5 7M2 17l6 3" stroke="#c03c3c" strokeWidth="2" /></g>,
  eye: <g><path d="M1 11c6-8 16-8 22 0-6 8-16 8-22 0z" fill="#fff" stroke="#445" /><circle cx="12" cy="10" r="5" fill="#6f93b8" stroke="#345" /><circle cx="12" cy="10" r="2" fill="#111" /><path d="M15 19h8l-4 4z" fill="#111" /></g>,
  funnel: <g><path d="M1 3h22l-8 9v11l-6-3v-8z" fill="#4f83ba" stroke="#2b4d73" /><path d="M1 2h22v4H1z" fill="#c7cf5c" stroke="#7b8230" /></g>,
  epsilon: <g><text x="0" y="17" fontSize="27" fontWeight="700" fontFamily="Liberation Serif, serif" fill="#7a3f8a">ε</text><path d="M13 14h10l-4 5v4l-3-1v-3z" fill="#eee" stroke="#888" /></g>,
  expand: <g><path d="M2 3h11M4 3v17M4 10h6M4 18h6" stroke="#555" strokeWidth="1.300" fill="none" /><path d="M6 6h5v5H6zM6 14h5v5H6z" fill="#f0b454" stroke="#a8722a" /><path d="M16 2h4v12h4l-6 7-6-7h4z" fill="#4f83ba" stroke="#2b4d73" /></g>,
  collapse: <g><path d="M2 3h11M4 3v17M4 10h6M4 18h6" stroke="#555" strokeWidth="1.300" fill="none" /><path d="M6 6h5v5H6zM6 14h5v5H6z" fill="#f0b454" stroke="#a8722a" /><path d="M16 21h4V9h4l-6-7-6 7h4z" fill="#4f83ba" stroke="#2b4d73" /></g>,
  removeLayer: <g><rect x="2" y="2" width="19" height="18" fill="#f3f3f3" stroke="#888" strokeWidth="1.500" /><rect x="15" y="16" width="8" height="7" rx="2" fill="#fff" stroke="#d33" strokeWidth="1.500" /></g>,
};

function Icon({ name, className = "size-6" }: { name: string; className?: string }) {
  return (
    <svg viewBox="0 0 24 24" className={`${className} shrink-0`} aria-hidden="true">
      {icons[name]}
    </svg>
  );
}

/* ------------------------------------------------------------------ */
/* Toolbars                                                            */
/* ------------------------------------------------------------------ */

function Tool({ name, disabled, active }: { name: string; disabled?: boolean; active?: boolean }) {
  return (
    <button
      type="button"
      aria-label={name}
      disabled={disabled}
      className={`flex h-[29px] w-[31px] shrink-0 items-center justify-center border ${active ? "border-[#92c0e0] bg-[#c0dcf3]" : "border-transparent"}`}
    >
      <Icon name={name} className={disabled ? "size-6 opacity-40 grayscale" : "size-6"} />
    </button>
  );
}

function Drop({ muted, className = "w-[15px]" }: { muted?: boolean; className?: string }) {
  return (
    <button type="button" aria-label="Optionen" className={`flex h-[29px] shrink-0 items-center justify-center ${className}`}>
      <svg viewBox="0 0 9 5" className="h-[5px] w-[9px]">
        <path d="M0 0h9L4.500 5z" fill={muted ? "#6a6a6a" : "#000"} />
      </svg>
    </button>
  );
}

function Grip() {
  return (
    <div className="flex w-3 shrink-0 justify-center self-stretch py-1">
      <div className="w-[3px] border-l-2 border-dotted border-[#b4b4b4]" />
    </div>
  );
}

function Rule() {
  return (
    <div className="flex w-[7px] shrink-0 justify-center self-stretch py-1">
      <div className="w-px bg-[#c4c4c4]" />
    </div>
  );
}

function Group({ children, className = "border-r pr-px" }: { children: React.ReactNode; className?: string }) {
  return (
    <div className={`flex shrink-0 items-center self-stretch border-[#a6a6a6] ${className}`}>
      <Grip />
      {children}
    </div>
  );
}

const rowClass = "flex h-[34px] shrink-0 items-center overflow-hidden border-b border-[#b0b0b0] bg-[#f0f0f0] shadow-[inset_0_1px_0_#fff]";

function Toolbars() {
  return (
    <div className="flex shrink-0 flex-col">
      <div className={rowClass}>
        <Group>
          {["newDoc", "folder", "save", "layoutNew", "layoutManager", "style"].map((n) => <Tool key={n} name={n} />)}
        </Group>
        <Group className="pr-[261px]">
          <Tool name="hand" active />
          {["panSelection", "zoomIn", "zoomOut", "zoomFull", "zoomSel", "zoomLayer"].map((n) => <Tool key={n} name={n} />)}
          <Tool name="zoomNative" disabled />
          <Tool name="zoomLast" />
        </Group>
        {["table", "abacus", "gear", "sigma", "ruler"].map((n) => <Tool key={n} name={n} />)}
        <Drop />
        <Tool name="mapTip" active />
        <Tool name="action" disabled />
        <Drop muted />
        <Tool name="textAnn" />
        <Drop />
      </div>

      <div className={rowClass}>
        <Group>
          {["dataSource", "geopackage", "shapeNew", "featherNew", "chip"].map((n) => <Tool key={n} name={n} />)}
          <Rule />
          <Tool name="virtual" />
          <Rule />
        </Group>
        <Group className="pr-[275px]">
          <Tool name="pencils" disabled />
          <Tool name="pencil" />
          <Tool name="saveEdit" disabled />
          <Tool name="pointsNew" disabled />
          <Tool name="vertexTool" disabled />
          <Drop muted />
          <Tool name="modify" disabled />
          <Tool name="trash" disabled />
          <Tool name="scissors" disabled />
        </Group>
        <div className="flex shrink-0 items-center self-stretch border-r border-[#a6a6a6] pr-px">
          {["abcPin", "abcEye", "abcMove", "abcRotate", "abcEdit"].map((n) => <Tool key={n} name={n} />)}
        </div>
        <Group><Tool name="database" /></Group>
        <Group>{["globeAdd", "globeSearch", "binoculars"].map((n) => <Tool key={n} name={n} />)}</Group>
        <Group>{["python", "kml", "kmz", "html", "rasterGlobe", "colorGrid", "gridNew"].map((n) => <Tool key={n} name={n} />)}</Group>
        <Group><Tool name="book" /></Group>
        <Group className=""><Tool name="topology" /></Group>
      </div>

      <div className={rowClass}>
        <Group className="pr-[333px]">
          <Tool name="cad" disabled />
          <Tool name="triangleRuler" disabled />
          <Tool name="pointsMove" disabled />
          <Drop muted />
          {["featRotate", "featSimplify", "ringAdd", "partAdd", "ringFill", "ringDelete", "partDelete", "reshape", "offset", "splitV", "mergeNodes", "cutFeat"].map((n) => (
            <Tool key={n} name={n} disabled />
          ))}
        </Group>
        <div className="h-5 w-[107px] shrink-0 border border-[#a0a0a0] bg-[#ccc]" />
        <Tool name="magnet" active />
        <Tool name="magnet" />
        <Tool name="magnet" active />
        <div className="w-[45px] shrink-0" />
        <Tool name="trace" />
      </div>

      <div className="flex h-[50px] shrink-0 items-center overflow-hidden border-b border-[#828790] bg-[#f0f0f0] shadow-[inset_0_1px_0_#fff]">
        <Group className="w-[183px] border-r">
          <Tool name="select" />
          <Drop />
        </Group>
        <Group className="w-[76px] border-r"><span /></Group>
        <Group className="w-[76px] border-r"><span /></Group>
        <Group className="w-[737px]">
          <div className="flex w-full items-center pl-14">
            <Drop muted />
            <label htmlFor="band" className="w-[34px] text-[13px]">Band:</label>
            <select id="band" disabled className="h-[22px] w-[60px] border border-[#bbb] bg-[#ccc] px-1 text-[13px] text-[#777]">
              <option>1</option>
            </select>
          </div>
        </Group>
        {["meshSel", "meshAdd", "meshChip", "meshDel", "meshTiles"].map((n) => <Tool key={n} name={n} disabled />)}
      </div>
    </div>
  );
}

const sideTools: [string, boolean?][] = [
  ["addVector"], ["addRaster"], ["addMesh"], ["addText"], ["addFeather"], ["virtualAdd"],
  ["addPostgis", true], ["addWms", true], ["addWcs"], ["addWfs", true], ["shapeNew", true], ["addTable"],
];

function SideToolbar() {
  return (
    <aside className="w-[50px] shrink-0 border-r border-[#828790] bg-[#f0f0f0]">
      <div className="mx-1 mt-1 mb-[7px] border-t-2 border-dotted border-[#b4b4b4]" />
      {sideTools.map(([name, drop]) => (
        <div key={name} className={`flex h-[30px] items-center ${name === "addTable" ? "pl-2" : "pl-px"}`}>
          <Tool name={name} />
          {drop && <Drop />}
        </div>
      ))}
    </aside>
  );
}

/* ------------------------------------------------------------------ */
/* Layer panel                                                         */
/* ------------------------------------------------------------------ */

type LayerRow = {
  label: string;
  level: number;
  open?: boolean;
  closed?: boolean;
  checked?: boolean;
  icon: string;
  style?: "muted" | "bold" | "active";
};

const layerRows: LayerRow[] = [
  { label: "Funde_WT_2017_2019", level: 0, checked: true, icon: "dotNavy", style: "active" },
  { label: "Strasse_Wege", level: 0, closed: true, icon: "group" },
  { label: "NSG_1937_und_1983", level: 0, open: true, checked: true, icon: "group" },
  { label: "NSG_1983", level: 1, open: true, checked: true, icon: "group" },
  { label: "nsg_1983_flaeche", level: 2, icon: "hatch", style: "muted" },
  { label: "nsg_1983 minus nsg_1937", level: 2, checked: true, icon: "orange", style: "bold" },
  { label: "nsg_1983_umriss", level: 2, icon: "yellowLine", style: "muted" },
  { label: "NSG_1937 = Alter Bannwald", level: 1, open: true, checked: true, icon: "group" },
  { label: "nsg_1937_umriss", level: 2, icon: "blackLine", style: "muted" },
  { label: "nsg_1937_flaeche", level: 2, icon: "redGrid", style: "muted" },
  { label: "Pflanzengesellschaften", level: 0, closed: true, icon: "group" },
  { label: "Biotope", level: 0, closed: true, icon: "group" },
  { label: "Baumfreie_offene_Moorbereiche", level: 0, closed: true, icon: "group" },
  { label: "Feuchte_und_nasse_Bereiche", level: 0, closed: true, icon: "group" },
  { label: "Bodenarten", level: 0, closed: true, icon: "polygon", style: "muted" },
  { label: "WT_DGM1_rast", level: 0, icon: "raster", style: "muted" },
  { label: "WT_DGM1_gpkg", level: 0, icon: "dotOrange", style: "muted" },
  { label: "WT_DGM1_xyz", level: 0, icon: "dotRed", style: "muted" },
  { label: "Funde_WT_2017_2019", level: 0, icon: "sheet", style: "bold" },
  { label: "OpenStreetMap Standard", level: 0, closed: true, icon: "raster", style: "muted" },
  { label: "WMS LGRB-BW BK50: Bodenkarte 1 : 50", level: 0, closed: true, icon: "raster", style: "muted" },
  { label: "WMS LGRB-BW GK50: Geologische Karte", level: 0, closed: true, icon: "raster", style: "muted" },
];

const layerIcons: Record<string, React.ReactNode> = {
  dotNavy: <circle cx="10" cy="10" r="3.500" fill="#0d2f50" />,
  dotOrange: <circle cx="10" cy="10" r="5" fill="#f59f26" stroke="#5b3c10" />,
  dotRed: <circle cx="10" cy="10" r="5" fill="#b5474f" stroke="#5c2a2e" />,
  hatch: <g><rect x=".7" y=".7" width="18.600" height="18.600" fill="#fff" stroke="#dfa030" strokeWidth="1.200" /><path d="M1.500 13.500l12-12M11 18l8-8" stroke="#111" strokeWidth="1.500" /></g>,
  orange: <rect x=".7" y=".7" width="18.600" height="18.600" fill="#fb8a06" stroke="#6a4410" />,
  yellowLine: <rect y="7" width="20" height="6" fill="#f7ee12" />,
  blackLine: <rect y="8" width="20" height="4" fill="#000" />,
  redGrid: <g fill="#fff" stroke="#b42a2a"><rect x="1" y="1" width="18" height="18" strokeWidth="2" /><path d="M5 2v16M14.500 2v16" strokeWidth="1.200" /></g>,
  polygon: <path d="M1 5c2-3 6-1 9 0 4 1 6-3 9-1 1 3 1 7 0 11-3 0-4-4-8-3-4 0-5 3-9 3-2-3-2-7-1-10z" fill="#e2e2e2" stroke="#777" />,
  raster: (
    <g>
      <path d="M2 2h16v4h-4v4h4v4h-4v4H2z" fill="#b9cfea" />
      <path d="M2 2h4v4H2zM10 2h4v4h-4zM6 6h4v4H6zM14 2h4v4h-4zM10 10h4v4h-4zM2 14h4v4H2zM2 10h4v4H2z" fill="#1f3752" />
    </g>
  ),
  sheet: <g fill="#eee" stroke="#777"><rect x="2" y="1" width="16" height="18" rx="1" /><path d="M2 6h16" /><path d="M4 3.500h5M11 3.500h5M4 9h5M11 9h5M4 12h5M11 12h5M4 15.500h5M11 15.500h5" strokeWidth="1.300" /></g>,
};

function LayerGlyph({ name }: { name: string }) {
  if (name === "group") return <Icon name="groupLayer" className="size-5" />;
  return (
    <svg viewBox="0 0 20 20" className="size-5 shrink-0" aria-hidden="true">
      {layerIcons[name]}
    </svg>
  );
}

function CheckBox({ id, checked }: { id: string; checked?: boolean }) {
  return (
    <span className="grid size-4 shrink-0 place-items-center">
      <input id={id} type="checkbox" defaultChecked={checked} className="peer col-start-1 row-start-1 size-4 appearance-none border border-[#333] bg-white" />
      <svg viewBox="0 0 12 12" className="pointer-events-none col-start-1 row-start-1 hidden size-3 peer-checked:block">
        <path d="M1 6l3.500 3.500L11 2.500" fill="none" stroke="#222" strokeWidth="1.300" />
      </svg>
    </span>
  );
}

const labelStyles = {
  muted: "text-[15px] font-bold italic text-[#808080]",
  bold: "text-[15px] font-bold text-black",
  active: "text-[15px] font-bold text-black underline",
};
const indents = ["pl-[3px]", "pl-7", "pl-[53px]"];

function LayerPanel() {
  return (
    <section className="absolute top-[170px] bottom-[38px] left-[50px] flex w-[346px] flex-col border border-t-0 border-[#828790] bg-white shadow-[0_2px_10px_rgba(0,0,0,0.35)]">
      <header className="flex h-[37px] shrink-0 items-center justify-between pl-2 text-[15px] text-[#999]">
        <h2>Layer</h2>
        <button type="button" aria-label="Schließen" className="grid size-[25px] place-items-center bg-[#e0e0e0] text-white">
          <svg viewBox="0 0 8 8" className="size-2"><path d="M1 1l6 6M7 1L1 7" stroke="#fff" strokeWidth="1.500" /></svg>
        </button>
      </header>
      <div className="flex h-[27px] shrink-0 items-center gap-[7px] border-b border-[#828790] bg-[#f0f0f0] pl-1">
        {["brush", "groupLayer", "eye", "funnel", "epsilon"].map((n) => <Icon key={n} name={n} className="size-4" />)}
        <Drop className="w-[9px]" />
        {["expand", "collapse", "removeLayer"].map((n) => <Icon key={n} name={n} className="size-4" />)}
      </div>
      <ul className="flex-1 overflow-hidden">
        {layerRows.map((row, i) => (
          <li key={i} className={`flex h-6 items-center ${indents[row.level]}`}>
            <span className="flex w-[22px] shrink-0 pl-[3px]">
              {row.open && <svg viewBox="0 0 11 11" className="size-[11px]"><path d="M1 3l4.500 4.500L10 3" fill="none" stroke="#333" strokeWidth="2" /></svg>}
              {row.closed && <svg viewBox="0 0 11 11" className="size-[11px]"><path d="M4 1l4.500 4.500L4 10" fill="none" stroke="#9a9a9a" strokeWidth="1.800" /></svg>}
            </span>
            <span className={`flex h-6 min-w-0 flex-1 items-center pl-[3px] ${row.style === "active" ? "bg-[#d9d9d9]" : ""}`}>
              {row.icon === "sheet" ? (
                <span className="w-[26px] shrink-0"><LayerGlyph name="sheet" /></span>
              ) : (
                <>
                  <CheckBox id={`layer-${i}`} checked={row.checked} />
                  <span className="flex w-8 shrink-0 justify-center pr-px"><LayerGlyph name={row.icon} /></span>
                </>
              )}
              <label htmlFor={`layer-${i}`} className={`whitespace-nowrap ${row.style ? labelStyles[row.style] : "text-[14px] text-black"}`}>
                {row.label}
              </label>
            </span>
          </li>
        ))}
      </ul>
      <div className="flex h-[19px] shrink-0 items-stretch bg-[#f0f0f0]">
        <button type="button" aria-label="Nach links" className="grid w-[21px] place-items-center">
          <svg viewBox="0 0 8 10" className="h-2.5 w-2"><path d="M6.500 1L2 5l4.500 4" fill="none" stroke="#444" strokeWidth="2" /></svg>
        </button>
        <div className="flex-1"><div className="h-full w-[68%] bg-[#cdcdcd]" /></div>
        <button type="button" aria-label="Nach rechts" className="grid w-[21px] place-items-center">
          <svg viewBox="0 0 8 10" className="h-2.5 w-2"><path d="M1.500 1L6 5 1.500 9" fill="none" stroke="#444" strokeWidth="2" /></svg>
        </button>
      </div>
      <div className="absolute top-[55px] left-[11px] h-[39px] w-[252px] border-4 border-[#ee0a0a]" />
      <div className="absolute top-[178px] left-[58px] h-[37px] w-[268px] border-4 border-[#ee0a0a]" />
    </section>
  );
}

/* ------------------------------------------------------------------ */
/* Map                                                                 */
/* ------------------------------------------------------------------ */

const finds: [number, number][] = [
  [930, 621], [930, 631], [935, 632], [937, 631], [912, 676], [911, 682], [870, 684], [879, 704], [823, 723], [778, 737],
  [779, 747], [776, 750], [818, 749], [755, 763], [884, 764], [837, 773], [795, 785], [835, 786], [840, 791], [775, 790],
  [786, 796], [795, 808], [825, 800], [820, 803], [830, 813], [773, 811], [860, 813], [878, 791], [879, 802], [898, 798],
  [910, 782], [925, 778], [761, 824], [774, 848], [780, 858], [798, 858], [817, 874], [839, 894], [966, 757], [973, 763],
  [1010, 750], [1043, 744], [1042, 750], [1058, 732], [1090, 735], [1094, 725], [1113, 720], [1113, 711],
  [1123, 709], [1121, 697], [1107, 685], [1107, 648], [1133, 679], [1138, 704], [1149, 704], [1167, 695], [1177, 695], [1189, 693],
  [1104, 353], [1077, 377], [1020, 413], [1141, 411], [1167, 410], [1198, 436], [1204, 435], [990, 467], [961, 496], [976, 510],
  [970, 536], [985, 568], [1010, 563], [1247, 492], [1311, 550], [1316, 561], [1317, 563], [1329, 577], [1347, 597], [1374, 602],
  [1357, 621], [1352, 638], [1319, 626], [1315, 636], [1318, 652], [1236, 678], [1268, 678], [1261, 686],
  [1434, 666], [1425, 671], [1440, 671], [1414, 684], [1444, 690], [1468, 677], [1481, 701], [1502, 730], [1472, 740],
  [1565, 792], [1578, 831],
];
const markers: [number, number][] = [[994, 762], [1250, 660], [1444, 630]];

function MapCanvas() {
  return (
    <main className="relative min-w-0 flex-1 overflow-hidden border-r border-[#828790] bg-white">
      <svg className="h-full w-full" role="img" aria-label="Karte">
        <g transform="translate(-50 -207)">
          <path
            d="M409 777L497 616 484 440 767 294 920 224 1074 286 1117 303 1129 276 1152 296 1163 295 1352 366 1395 371 1364 443 1336 533 1320 550 1525 761 1057 963 987 959 912 959 811 968 780 904 558 965 545 944zM1155 475L1188 578 1182 690 1173 760 941 792 838 814 720 823 661 828 609 830 598 822 596 809 645 767 690 716 770 632z"
            fill="#fb8a06"
            fillRule="evenodd"
            stroke="#3d2a10"
            strokeWidth="1.300"
          />
          {finds.map(([x, y], i) => <circle key={i} cx={x} cy={y} r="3.300" fill="#050505" />)}
          {markers.map(([x, y], i) => <path key={i} d={`M${x} ${y - 4.5}l4.500 4.500-4.500 4.500-4.500-4.500z`} fill="#050505" />)}
        </g>
      </svg>
      <div className="absolute right-[540px] bottom-[46px] grid h-11 w-[137px] place-items-center rounded-xl border border-black bg-[#ffff80] font-['Liberation_Sans',sans-serif] text-base font-bold">
        Bild 21
      </div>
    </main>
  );
}

/* ------------------------------------------------------------------ */
/* Menus                                                               */
/* ------------------------------------------------------------------ */

const menus = ["Projekt", "Bearbeiten", "Ansicht", "Layer", "Einstellungen", "Erweiterungen", "Vektor", "Raster", "Datenbank", "Web", "Netz", "Verarbeitung", "Hilfe"];

const vectorMenu: [string, string?, boolean?][] = [
  ["KML Tools", undefined, true],
  ["Topologie-Prüfung", "topology"],
  ["QuickOSM", "quickosm", true],
  ["Geoverarbeitungswerkzeuge", undefined, true],
  ["Geometrie-Werkzeuge", undefined, true],
  ["Analyse-Werkzeuge", undefined, true],
  ["Forschungswerkzeuge", undefined, true],
  ["Datenmanagement-Werkzeuge", undefined, true],
];

const geoMenu: [string, string][] = [
  ["Puffer...", "buffer"],
  ["Zuschneiden...", "clip"],
  ["Konvexe Hülle...", "hull"],
  ["Differenz...", "difference"],
  ["Auflösen...", "dissolve"],
  ["Verschneidung...", "clip2"],
  ["Symmetrische Differenz...", "symdiff"],
  ["Vereinigungen...", "union"],
  ["Ausgewählte Polygone entfernen...", "dissolve"],
];

function VectorMenu() {
  return (
    <div className="absolute top-full -left-px z-20 w-[292px] border border-[#bcbcbc] bg-[#f0f0f0] px-0.5 pt-0.5 pb-[3px] shadow-[4px_4px_3px_-1px_rgba(0,0,0,0.5)]">
      {vectorMenu.map(([label, icon, sub]) => (
        <button
          type="button"
          key={label}
          className={`flex w-full items-center pl-0.5 text-left ${icon ? "h-[25px]" : "h-6"} ${label === "Geoverarbeitungswerkzeuge" ? "bg-[#91c9f7]" : ""}`}
        >
          <span className="w-8 shrink-0">{icon && <Icon name={icon} className="size-5" />}</span>
          <span className="flex-1 whitespace-nowrap">{label}</span>
          {sub && <svg viewBox="0 0 4 8" className="mr-3 h-2 w-1"><path d="M0 0l4 4-4 4z" /></svg>}
        </button>
      ))}
      <div className="absolute top-[74px] left-[286px] w-[307px] border border-[#bcbcbc] bg-[#f0f0f0] px-0.5 py-0.5 shadow-[4px_4px_3px_-1px_rgba(0,0,0,0.5)]">
        {geoMenu.map(([label, icon]) => (
          <button
            type="button"
            key={label}
            className={`flex h-[26px] w-full items-center pl-[3px] text-left ${label === "Verschneidung..." ? "bg-[#91c9f7]" : ""}`}
          >
            <span className="w-[30px] shrink-0"><Icon name={icon} className="size-[18px]" /></span>
            <span className="whitespace-nowrap">{label}</span>
          </button>
        ))}
        <svg viewBox="0 0 13 20" className="absolute top-[156px] left-[121px] h-5 w-[13px]">
          <path d="M1 1v15l3.500-3.200L7 19l3-1.300L7.500 12H12z" fill="#b411ea" stroke="#3c0a50" />
        </svg>
      </div>
    </div>
  );
}

/* ------------------------------------------------------------------ */
/* Status bar                                                          */
/* ------------------------------------------------------------------ */

function Spin({ id, value, width }: { id: string; value: string; width: string }) {
  return (
    <span className={`flex h-[22px] items-stretch border border-[#7a7a7a] bg-white p-px ${width}`}>
      <input id={id} defaultValue={value} className="w-0 min-w-0 flex-1 pl-px outline-none" />
      <span className="flex w-3.5 flex-col">
        {["M0 4h7L3.500 0z", "M0 0h7L3.500 4z"].map((d) => (
          <button type="button" key={d} aria-label="Wert ändern" className="grid flex-1 place-items-center border border-[#bbb] bg-[#f0f0f0]">
            <svg viewBox="0 0 7 4" className="h-1 w-[7px]"><path d={d} /></svg>
          </button>
        ))}
      </span>
    </span>
  );
}

function StatusBar() {
  return (
    <footer className="flex h-8 shrink-0 items-center border-t border-b border-t-[#828790] border-b-[#222] bg-[#f0f0f0] pr-0.5 pl-1 text-[13px]">
      <div className="flex h-[22px] w-[277px] items-center border border-[#7a7a7a] bg-white pl-2">
        <svg viewBox="0 0 12 12" className="size-3"><circle cx="5" cy="5" r="4" fill="none" stroke="#888" strokeWidth="1.200" /><path d="M8 8l3.500 3.500" stroke="#888" strokeWidth="1.500" /></svg>
        <input aria-label="Suche" placeholder="Zu suchender Typ (Strg+K)" className="ml-2 min-w-0 flex-1 outline-none placeholder:text-[#777]" />
      </div>
      <div className="ml-auto flex items-center text-[12px]">
        <label htmlFor="coord" className="mr-[3px]">Koordinate</label>
        <input id="coord" defaultValue="473417,5398061" className="h-[22px] w-[110px] border border-[#7a7a7a] bg-white pl-1.5" />
        <svg viewBox="0 0 20 20" className="mx-[3px] size-5">
          <path d="M4 3l3-2 4 4v5l-4 1-4-4zM8 10c3-2 8 0 8 4s-5 6-8 3" fill="#fff" stroke="#111" strokeWidth="1.800" />
          <path d="M5 4l5 6M8 3l4 6M3 12l4 6M14 3l4-2M14 6l4 0M10 14l4 1" stroke="#111" strokeWidth="1.300" />
        </svg>
        <label htmlFor="scale" className="mr-[3px] ml-2.5">Maßstab</label>
        <span className="relative flex">
          <select id="scale" className="h-[22px] w-[91px] appearance-none border border-[#7a7a7a] bg-white pl-1"><option>1:5000</option></select>
          <svg viewBox="0 0 10 6" className="pointer-events-none absolute top-2 right-1.5 h-1.5 w-2.5"><path d="M1 1l4 4 4-4" fill="none" stroke="#555" /></svg>
        </span>
        <svg viewBox="0 0 16 18" className="mx-[11px] h-[18px] w-4"><path d="M4 9V5.500c0-5 8-5 8 0V9" fill="none" stroke="#888" strokeWidth="1.800" /><rect x="1" y="8" width="14" height="10" rx="1" fill="#666" /></svg>
        <label htmlFor="mag" className="mr-[3px]">Vergrößerung</label>
        <Spin id="mag" value="100%" width="w-[88px]" />
        <label htmlFor="rot" className="mr-2 ml-2">Drehung</label>
        <Spin id="rot" value="0,0 °" width="w-[85px]" />
        <span className="ml-1.5 flex items-center gap-1.5">
          <CheckBox id="render" checked />
          <label htmlFor="render">Zeichnen</label>
        </span>
        <button type="button" className="ml-[17px] flex items-center gap-1">
          <svg viewBox="0 0 20 20" className="size-[19px]"><circle cx="10" cy="10" r="8" fill="#ccc" stroke="#666" /><path d="M1 10h18M3 6h14M3 14h14M10 2v16M6 3c-3 4-3 10 0 14M14 3c3 4 3 10 0 14" stroke="#666" fill="none" /></svg>
          EPSG:25832
        </button>
        <button type="button" aria-label="Meldungen" className="ml-[18px]">
          <svg viewBox="0 0 20 20" className="size-5"><path d="M10 1a9 8.500 0 1 0 3 16.500l4 2-1-4A9 8.500 0 0 0 10 1z" fill="#5a5a5a" /><path d="M5 9.500h2M9 9.500h2M13 9.500h2" stroke="#fff" strokeWidth="2" /></svg>
        </button>
        <button type="button" aria-label="Erweiterungen" className="ml-3">
          <svg viewBox="0 0 24 20" className="h-5 w-6"><path d="M2 6h5c-2-4 4-4 3 0h5v4c4-2 4 4 0 3v6h-5c1-4-4-4-3 0H2v-5c4 1 4-4 0-3z" fill="#c4c4c4" stroke="#555" /><path d="M15 4c2-4 7-3 6 1l-3 2M22 10l-5 8" stroke="#777" fill="none" strokeWidth="1.500" /></svg>
        </button>
      </div>
    </footer>
  );
}

/* ------------------------------------------------------------------ */
/* Window                                                              */
/* ------------------------------------------------------------------ */

export default function App() {
  return (
    <div className="relative flex h-screen flex-col overflow-hidden bg-white font-['Open_Sans','Noto_Sans',sans-serif] text-[14px] text-black">
      <header className="flex h-[29px] shrink-0 items-center pl-0.5">
        <svg viewBox="0 0 20 20" className="size-5">
          <circle cx="9.500" cy="9.500" r="7.500" fill="none" stroke="#6aa23a" strokeWidth="3.800" />
          <path d="M10.500 10.500l8 8" stroke="#6aa23a" strokeWidth="4" />
          <path d="M9 9l5 5" stroke="#ee7913" strokeWidth="3" />
          <path d="M7 7h5l-5 5z" fill="#f3b33c" />
        </svg>
        <h1 className="ml-1.5 text-[15px]">*QGIS für Pilzfreunde 40 (Vortest) — QGIS</h1>
        <div className="ml-auto flex pr-0.5">
          <button type="button" aria-label="Minimieren" className="grid h-7 w-[58px] place-items-center"><svg viewBox="0 0 12 12" className="size-3"><path d="M0 5.500h12" stroke="#000" /></svg></button>
          <button type="button" aria-label="Wiederherstellen" className="grid h-7 w-[58px] place-items-center"><svg viewBox="0 0 12 12" className="size-3"><path d="M.5 2.500h9v9h-9zM2.500 2.500v-2h9v9h-2" fill="none" stroke="#000" /></svg></button>
          <button type="button" aria-label="Schließen" className="grid h-7 w-[60px] place-items-center"><svg viewBox="0 0 12 12" className="size-3"><path d="M0 0l12 12M12 0L0 12" stroke="#000" /></svg></button>
        </div>
      </header>
      <nav className="flex h-[26px] shrink-0 pb-px">
        {menus.map((m) => (
          <div key={m} className="relative flex">
            <button type="button" className={m === "Vektor" ? "border border-[#99d1ff] bg-[#cce8ff] px-[7px]" : "px-2"}>{m}</button>
            {m === "Vektor" && <VectorMenu />}
          </div>
        ))}
      </nav>
      <Toolbars />
      <div className="flex min-h-0 flex-1">
        <SideToolbar />
        <MapCanvas />
      </div>
      <StatusBar />
      <LayerPanel />
    </div>
  );
}
